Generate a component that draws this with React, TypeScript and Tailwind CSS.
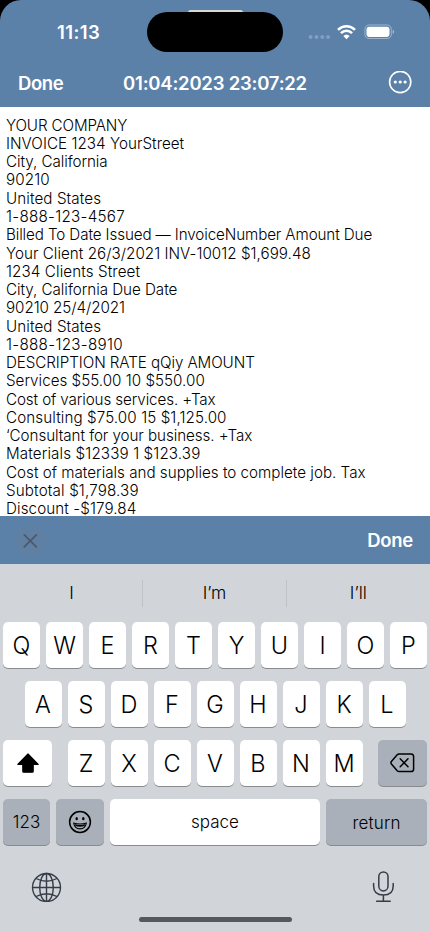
import React from "react";

const lines: [string, string][] = [
  ["YOUR COMPANY", "tracking-[-0.13px]"],
  ["INVOICE 1234 YourStreet", "tracking-[0.04px]"],
  ["City, California", "tracking-[-0.06px]"],
  ["90210", "tracking-[0.12px]"],
  ["United States", "tracking-[0.09px]"],
  ["1-888-123-4567", "tracking-[0.27px]"],
  ["Billed To Date Issued — InvoiceNumber Amount Due", "tracking-[-0.11px]"],
  ["Your Client 26/3/2021 INV-10012 $1,699.48", "tracking-[0.03px]"],
  ["1234 Clients Street", "tracking-[0.1px]"],
  ["City, California Due Date", "tracking-[-0.04px]"],
  ["90210 25/4/2021", "tracking-[-0.06px]"],
  ["United States", "tracking-[0.09px]"],
  ["1-888-123-8910", "tracking-[0.3px]"],
  ["DESCRIPTION RATE qQiy AMOUNT", "tracking-[-0.08px]"],
  ["Services $55.00 10 $550.00", "tracking-[0.01px]"],
  ["Cost of various services. +Tax", "tracking-[-0.11px]"],
  ["Consulting $75.00 15 $1,125.00", "tracking-[0.09px]"],
  ["‘Consultant for your business. +Tax", "tracking-[-0.07px]"],
  ["Materials $12339 1 $123.39", "tracking-[0.12px]"],
  ["Cost of materials and supplies to complete job. Tax", "tracking-[0px]"],
  ["Subtotal $1,798.39", "tracking-[0.14px]"],
  ["Discount -$179.84", "tracking-[0.09px]"],
];

function Key({ children, className = "w-[37px] bg-white pt-[2px] text-[23.5px] font-light" }: { children: React.ReactNode; className?: string }) {
  return (
    <div className={`flex h-[46px] shrink-0 items-center justify-center rounded-[5px] shadow-[0_1px_0_#898b8f] ${className}`}>
      {children}
    </div>
  );
}

function StatusBar() {
  return (
    <div className="relative h-[60px]">
      <div className="absolute top-[10px] left-[188px] h-[5px] w-[55px] rounded-full bg-[#d8d8d8]" />
      <div className="absolute top-[12px] left-[147px] h-10 w-[136px] rounded-full bg-black" />
      <div className="flex justify-between pt-[21px] pr-[35px] pl-[57px]">
        <span className="text-[18.5px] leading-[23px] font-semibold tracking-[0.4px]">11:13</span>
        <div className="flex items-start">
          <svg width="23" height="22" viewBox="0 0 23 22" fill="#fff" fillOpacity="0.24">
            <circle cx="2.6" cy="16" r="2" />
            <circle cx="8.5" cy="16" r="2" />
            <circle cx="14.3" cy="16" r="2" />
            <circle cx="20.1" cy="16" r="2" />
          </svg>
          <svg className="mt-[3px] ml-[6.5px]" width="19" height="16" viewBox="0 0 19 16" fill="none" stroke="#fff" strokeWidth="2.5">
            <path d="M1 5.8Q4.7 2.2 9.5 2.2T18 5.8" />
            <path d="M3.9 9.1Q6.4 6.7 9.5 6.7T15.1 9.1" />
            <path d="M6.3 12Q9.5 9 12.7 12L9.5 15.3Z" fill="#fff" stroke="none" />
          </svg>
          <svg className="mt-[3px] ml-[8px]" width="31" height="16" viewBox="0 0 31 16">
            <rect x="0.9" y="1" width="26.4" height="13.5" rx="4.2" fill="none" stroke="#fff" strokeOpacity="0.4" />
            <rect x="2.5" y="2.7" width="23" height="10.2" rx="2.8" fill="#fff" />
            <path d="M28.7 5.7Q30.2 6.2 30.2 7.8T28.7 10Z" fill="#fff" fillOpacity="0.45" />
          </svg>
        </div>
      </div>
    </div>
  );
}

export default function App() {
  return (
    <div className="h-[932px] w-[430px] overflow-hidden bg-black font-['Inter','Liberation_Sans',sans-serif] text-black">
      <header className="h-[107px] rounded-t-[21px] bg-[#5c81a9] text-white">
        <StatusBar />
        <div className="grid grid-cols-[1fr_auto_1fr] items-center pt-[9px] pr-[18px] pl-[18px] text-[18.5px] leading-7 font-semibold tracking-[-0.22px]">
          <span className="tracking-[-0.4px]">Done</span>
          <span>01:04:2023 23:07:22</span>
          <svg className="justify-self-end" width="24" height="24" viewBox="0 0 24 24" fill="none" stroke="#fff" strokeWidth="1.6">
            <circle cx="12.2" cy="11" r="10.6" />
            <g fill="#fff" stroke="none">
              <circle cx="7.3" cy="11" r="1.6" />
              <circle cx="12.2" cy="11" r="1.6" />
              <circle cx="17.1" cy="11" r="1.6" />
            </g>
          </svg>
        </div>
      </header>
      <main className="h-[409px] bg-white pt-[9.7px] pl-[6px] text-[15.2px] leading-[18.26px] font-[350] whitespace-nowrap">
        {lines.map(([line, tracking], i) => (
          <p key={i} className={tracking}>{line}</p>
        ))}
      </main>
      <div className="flex h-12 items-center justify-between bg-[#5c81a9] pr-[17px] pl-[15px]">
        <div className="flex size-[31px] items-center justify-center rounded-full bg-[#6080a3]">
          <svg width="15" height="15" viewBox="0 0 15 15" stroke="#4d5969" strokeWidth="1.8" strokeLinecap="round">
            <path d="M1.3 1.9L13.3 13.9M13.3 1.9L1.3 13.9" />
          </svg>
        </div>
        <span className="pt-[2px] text-[18.5px] font-semibold tracking-[-0.3px] text-white">Done</span>
      </div>
      <section className="h-[368px] bg-[#d1d4d9]">
        <div className="grid h-[58px] grid-cols-3 items-center text-center text-[17.5px] font-[350]">
          <span>I</span>
          <span className="-ml-px flex h-[27px] items-center justify-center border-x border-[#bfc2c7]">I’m</span>
          <span>I’ll</span>
        </div>
        <div className="flex flex-col gap-[13px]">
          <div className="flex justify-center gap-[6px]">
            {[..."QWERTYUIOP"].map((k) => <Key key={k}>{k}</Key>)}
          </div>
          <div className="flex justify-center gap-[6px]">
            {[..."ASDFGHJKL"].map((k) => <Key key={k}>{k}</Key>)}
          </div>
          <div className="flex justify-between px-[3px]">
            <Key className="w-[49px] bg-white">
              <svg width="24" height="20" viewBox="0 0 24 20">
                <path d="M12 1L22.2 11.3H17.2V18.4Q17.2 19.2 16.4 19.2H7.6Q6.8 19.2 6.8 18.4V11.3H1.8Z" stroke="#000" strokeWidth="1.2" strokeLinejoin="round" />
              </svg>
            </Key>
            <div className="flex gap-[6px]">
              {[..."ZXCVBNM"].map((k) => <Key key={k}>{k}</Key>)}
            </div>
            <Key className="w-[49px] bg-[#aab0ba]">
              <svg width="25" height="20" viewBox="0 0 25 20" fill="none" stroke="#000" strokeWidth="1.5" strokeLinejoin="round" strokeLinecap="round">
                <path d="M9 .9H21Q23.6 .9 23.6 3.5V16Q23.6 18.6 21 18.6H9Q8 18.6 7.2 17.8L1.4 11Q.5 9.8 1.4 8.5L7.2 1.7Q8 .9 9 .9ZM10.2 5.8L18 13.8M18 5.8L10.2 13.8" />
              </svg>
            </Key>
          </div>
          <div className="flex gap-[6px] px-[3px]">
            <Key className="w-[47px] bg-[#aab0ba] pt-[2px] text-[17px] font-[350]">123</Key>
            <Key className="w-[48px] bg-[#aab0ba]">
              <svg width="24" height="24" viewBox="0 0 24 24" fill="none" stroke="#000" strokeWidth="1.5">
                <circle cx="12" cy="12" r="10.4" />
                <ellipse cx="8.7" cy="8.7" rx="1.2" ry="1.6" fill="#000" stroke="none" />
                <ellipse cx="15.3" cy="8.7" rx="1.2" ry="1.6" fill="#000" stroke="none" />
                <path d="M5.6 13Q12 15 18.4 13Q17.3 18.9 12 18.9T5.6 13Z" strokeWidth="1.1" strokeLinejoin="round" />
                <path d="M6.5 14.1Q12 16.1 17.5 14.1L16.5 16Q12 17.4 7.5 16Z" fill="#000" stroke="none" />
              </svg>
            </Key>
            <Key className="w-[210px] bg-white pt-[1px] text-[17px] font-[350]">space</Key>
            <Key className="w-[101px] bg-[#aab0ba] pt-[3px] text-[17px] font-[350] tracking-[0.2px]">return</Key>
          </div>
        </div>
        <div className="flex items-start justify-between pt-[26px] pr-[35px] pl-[31px]">
          <svg width="31" height="31" viewBox="0 0 31 31" fill="none" stroke="#353d49" strokeWidth="1.4">
            <circle cx="15.5" cy="16.5" r="14" />
            <ellipse cx="15.5" cy="16.5" rx="6.8" ry="14" />
            <path d="M15.5 2.5V30.5M1.5 16.5H29.5M5.1 7.5Q15.5 13 25.9 7.5M5.1 25.5Q15.5 20 25.9 25.5" />
          </svg>
          <svg width="24" height="33" viewBox="0 0 24 33" fill="none" stroke="#353d49" strokeWidth="1.5" strokeLinecap="round">
            <rect x="7.8" y=".9" width="9.2" height="19" rx="4.6" />
            <path d="M2.6 12.5V15Q2.6 24.1 12.4 24.1T22.2 15V12.5M12.4 24.1V30.2M5.6 30.2H19.2" />
          </svg>
        </div>
        <div className="mx-auto mt-[13px] h-[5px] w-[153px] rounded-full bg-[#57585b]" />
      </section>
    </div>
  );
}
